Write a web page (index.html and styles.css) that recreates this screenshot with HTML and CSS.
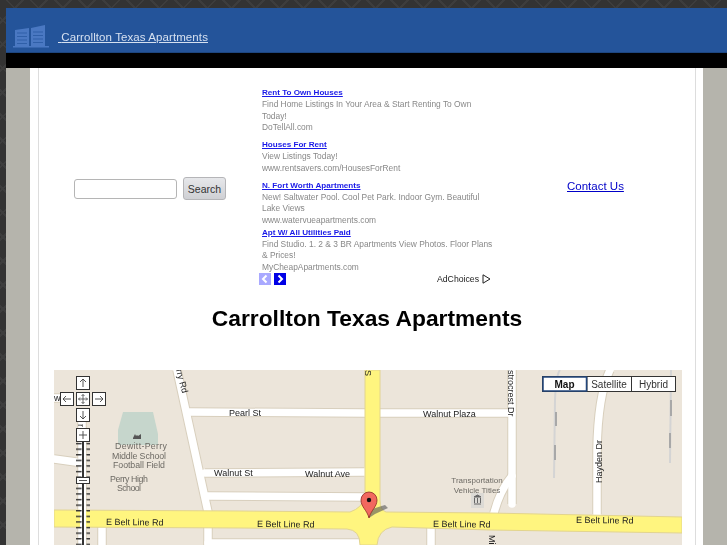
FILE: index.html
```html
<!DOCTYPE html>
<html lang="en">
<head>
<meta charset="utf-8">
<title>Carrollton Texas Apartments</title>
<link rel="stylesheet" href="styles.css">
</head>
<body>
<header class="site-header">
  <svg class="logo" width="36" height="25" viewBox="0 0 36 25">
    <path fill="#4a78c2" d="M2 6l14-2v18H2zM18 4l14-3v21H18zM0 22h36v1.5H0z"/>
    <path stroke="#2f5fa8" stroke-width="1.2" d="M4 9h10M4 12.5h10M4 16h10M4 19.500h10M20 8h10M20 11.500h10M20 15h10M20 18.500h10"/>
  </svg>
  <a class="site-link" href="#"><span class="pre"> </span>Carrollton Texas Apartments</a>
</header>
<div class="black-bar"></div>
<div class="page">
  <main class="sheet">
    <div class="inner">
    <div class="columns">
      <form class="search">
        <input class="search-input" type="text">
        <button class="search-btn" type="button">Search</button>
      </form>
      <section class="ads">
        <div class="ad gap-a">
          <a class="ad-title" href="#">Rent To Own Houses</a>
          <p class="ad-desc">Find Home Listings In Your Area &amp; Start Renting To Own Today!</p>
          <p class="ad-url">DoTellAll.com</p>
        </div>
        <div class="ad gap-a">
          <a class="ad-title" href="#">Houses For Rent</a>
          <p class="ad-desc">View Listings Today!</p>
          <p class="ad-url">www.rentsavers.com/HousesForRent</p>
        </div>
        <div class="ad gap-b">
          <a class="ad-title" href="#">N. Fort Worth Apartments</a>
          <p class="ad-desc">New! Saltwater Pool. Cool Pet Park. Indoor Gym. Beautiful Lake Views</p>
          <p class="ad-url">www.watervueapartments.com</p>
        </div>
        <div class="ad">
          <a class="ad-title" href="#">Apt W/ All Utilities Paid</a>
          <p class="ad-desc">Find Studio. 1. 2 &amp; 3 BR Apartments View Photos. Floor Plans &amp; Prices!</p>
          <p class="ad-url">MyCheapApartments.com</p>
        </div>
        <div class="ad-foot">
          <span class="pager off"><svg width="12" height="12" viewBox="0 0 12 12"><path d="M7.500 2.500L4 6l3.500 3.500" fill="none" stroke="#fff" stroke-width="2"/></svg></span>
          <span class="pager"><svg width="12" height="12" viewBox="0 0 12 12"><path d="M4.500 2.500L8 6l-3.500 3.500" fill="none" stroke="#fff" stroke-width="2"/></svg></span>
          <span class="adchoices">AdChoices
            <svg width="9" height="10" viewBox="0 0 9 10"><path d="M1 .8v8.400L8 5z" fill="none" stroke="#222" stroke-width="1"/></svg>
          </span>
        </div>
      </section>
      <a class="contact" href="#">Contact Us</a>
    </div>
    <h1 class="title">Carrollton Texas Apartments</h1>
    <svg class="map" width="628" height="175" viewBox="54 370 628 175">
      <defs>
        <pattern id="ticks" x="0" y="441" width="14" height="5.600" patternUnits="userSpaceOnUse">
          <path d="M3 2.500h8" stroke="#333" stroke-width="1.500" stroke-linecap="round"/>
        </pattern>
      </defs>
      <rect x="54" y="370" width="628" height="175" fill="#ece5da"/>
      <g class="road-edge">
        <path d="M177 370L208 512V545"/>
        <path d="M190 412L365 413M380 413L512 413"/>
        <path d="M205 473L364 472"/>
        <path d="M208 496L364 497"/>
        <path d="M512 370V504"/>
        <path d="M597 514V450Q598 395 610 370"/>
        <path d="M54 459L76 462M54 398H60"/>
        <path d="M82 420V545M102 527V545M431 528V545"/>
        <path d="M512 476Q500 490 494 513"/>
        <path d="M208 543H360"/>
      </g>
      <g class="road">
        <path d="M177 370L208 512V545"/>
        <path d="M190 412L365 413M380 413L512 413"/>
        <path d="M205 473L364 472"/>
        <path d="M208 496L364 497"/>
        <path d="M512 370V504"/>
        <path d="M597 514V450Q598 395 610 370"/>
        <path d="M54 459L76 462M54 398H60"/>
        <path d="M82 420V545M102 527V545M431 528V545"/>
        <path d="M512 476Q500 490 494 513"/>
        <path d="M208 543H360"/>
      </g>
      <path class="creek" d="M560 370Q556 375 555 400L554 478"/>
      <path class="creek-dash" d="M556 412V426M555 445V460"/>
      <path class="creek" d="M671 370L670 463"/>
      <path class="creek-dash" d="M671 400V416M670 433V448"/>
      <path class="highway" d="M54 510L240 511L350 512Q362 508 365 497L365 370H380V500Q380 510 386 512L490 513L682 517V533L490 530L392 527Q378 530 377 545H360Q360 530 347 529L240 528L54 527Z"/>
      <path class="field" d="M123 412H153L158 434V445H118V430Z"/>
      <rect class="bldg" x="471" y="493" width="13" height="15"/>
      <path d="M474 497h7l-3.500-2zM474.500 498v5M477.500 498v5M480.500 498v5M474 504h7" stroke="#666" fill="#666" stroke-width="1"/>
      <path d="M133 438l2-4 1 2 1-1 1 1 3-2v5h-8z" fill="#555"/>

      <g class="lbl">
        <text x="229" y="416">Pearl St</text>
        <text x="423" y="417">Walnut Plaza</text>
        <text x="214" y="476">Walnut St</text>
        <text x="305" y="477">Walnut Ave</text>
        <text x="106" y="525" transform="rotate(.6 106 525)">E Belt Line Rd</text>
        <text x="257" y="527" transform="rotate(.6 257 527)">E Belt Line Rd</text>
        <text x="433" y="527" transform="rotate(.6 433 527)">E Belt Line Rd</text>
        <text x="576" y="523" transform="rotate(.6 576 523)">E Belt Line Rd</text>
        <text x="176" y="370" transform="rotate(75 176 370)">rry Rd</text>
        <text x="602" y="483" transform="rotate(-90 602 483)">Hayden Dr</text>
        <text x="508" y="370" transform="rotate(90 508 370)">strocrest Dr</text>
        <text x="489" y="535" transform="rotate(90 489 535)">Mill</text>
        <text x="365" y="370" transform="rotate(90 365 370)">S</text>
        <text x="54" y="401">w</text>
        <text x="78" y="424" transform="rotate(90 78 424)">r</text>
      </g>
      <g class="poi">
        <text x="141" y="449" textLength="52">Dewitt-Perry</text>
        <text x="139" y="459" textLength="54">Middle School</text>
        <text x="139" y="468" textLength="52">Football Field</text>
        <text x="129" y="482" textLength="38">Perry High</text>
        <text x="129" y="491" textLength="24">School</text>
      </g>
      <g class="poi small">
        <text x="477" y="483">Transportation</text>
        <text x="477" y="493">Vehicle Titles</text>
      </g>

      <path d="M369 518L372 509L385 505L388 508L375 514Z" fill="#555" opacity=".6"/>
      <path d="M369 518C367 510 361 507 361 500A8 8 0 0 1 377 500C377 507 371 510 369 518Z" fill="#f2685f" stroke="#8b2a24" stroke-width=".8"/>
      <circle cx="369" cy="500" r="2.200" fill="#111"/>

      <rect class="track" x="80" y="441" width="6" height="104"/>
      <rect x="76" y="441" width="14" height="104" fill="url(#ticks)"/>
      <rect class="track-in" x="82" y="441" width="2" height="104"/>
      <g class="ctl">
        <rect x="76.500" y="376.500" width="13" height="13"/>
        <rect x="60.500" y="392.500" width="13" height="13"/>
        <rect x="76.500" y="392.500" width="13" height="13"/>
        <rect x="92.500" y="392.500" width="13" height="13"/>
        <rect x="76.500" y="408.500" width="13" height="13"/>
        <rect x="76.500" y="428.500" width="13" height="13"/>
        <rect x="76.500" y="477.500" width="13" height="6"/>
      </g>
      <path class="glyph" d="M83 387V379M80 382L83 379L86 382M71 399H63M66 396L63 399L66 402M95 399H103M100 396L103 399L100 402M83 411V419M80 416L83 419L86 416M79 435H87M83 431V439M79 480.500H87"/>
      <path class="glyph-sm" d="M83 394.500V403.500M78.500 399H87.500M81.500 396L83 394.500L84.500 396M81.500 402L83 403.500L84.500 402M80 397.500L78.500 399L80 400.500M86 397.500L87.500 399L86 400.500"/>

      <g class="type">
        <rect x="542.500" y="376.500" width="133" height="15"/>
        <path d="M587 377V391M631.500 377V391"/>
        <rect class="type-on" x="543" y="377" width="43.500" height="14"/>
      </g>
      <g class="type-lbl">
        <text class="on" x="564.500" y="387.500">Map</text>
        <text x="609" y="387.500">Satellite</text>
        <text x="653.500" y="387.500">Hybrid</text>
      </g>
    </svg>
    </div>
  </main>
</div>
</body>
</html>
```

FILE: styles.css
```css
html, body {
  margin: 0;
  height: 545px;
  overflow: hidden;
}
body {
  box-sizing: border-box;
  padding: 8px 0 0 6px;
  font-family: "Liberation Sans", Arial, sans-serif;
  background-color: #333;
  background-image:
    repeating-linear-gradient(45deg, transparent 0 15px, #3d3d3d 15px 17px),
    repeating-linear-gradient(-45deg, transparent 0 15px, #3d3d3d 15px 17px);
}
.site-header {
  height: 45px;
  box-sizing: border-box;
  background: #24549a;
  border-bottom: 1px solid #1d4680;
  display: flex;
  align-items: flex-end;
  padding: 0 0 3px 7px;
}
.logo {
  display: block;
  margin-right: 7px;
  filter: blur(.5px);
}
.site-link {
  color: #d5e0f0;
  font-size: 11.500px;
  letter-spacing: .09px;
  line-height: 13px;
  margin-bottom: 5px;
  white-space: pre;
  filter: blur(.3px);
}
.pre { padding-left: 2px; }
.black-bar {
  height: 15px;
  background: #000;
}
.page {
  background: #b5b4ac;
  padding: 0 24px;
  height: 477px;
}
.sheet {
  box-sizing: border-box;
  width: 673px;
  height: 477px;
  background: #fff;
  padding: 0 7px 0 8px;
}
.inner {
  height: 477px;
  border-left: 1px solid #ddd;
  border-right: 1px solid #ddd;
}
.columns {
  display: flex;
  align-items: flex-start;
  height: 222px;
}
.search {
  width: 188px;
  padding: 109px 0 0 35px;
  display: flex;
  align-items: center;
  gap: 6px;
}
.search-input {
  box-sizing: border-box;
  width: 103px;
  height: 20px;
  margin: 0;
  padding: 0;
  background: #fff;
  border: 1px solid #b5b5b5;
  border-radius: 3px;
}
.search-btn {
  box-sizing: border-box;
  width: 43px;
  height: 23px;
  margin: 0;
  padding: 0;
  font: 10.500px "Liberation Sans", Arial, sans-serif;
  color: #333;
  background: linear-gradient(#e6e7ea, #cfd0d4);
  border: 1px solid #b5b5b8;
  border-radius: 3px;
}
.ads {
  width: 233px;
  padding-top: 19px;
  font-size: 8.400px;
  filter: blur(.35px);
}
.ad-title {
  display: block;
  line-height: 12px;
  font-weight: bold;
  font-size: 8.100px;
  color: #1a1ae8;
  text-decoration: underline;
}
.ad p { margin: 0; }
.ad-desc {
  line-height: 11.500px;
  color: #888;
}
.ad-url {
  line-height: 10.500px;
  color: #888;
}
.gap-a { margin-bottom: 6.500px; }
.gap-b { margin-bottom: 1.500px; }
.ad-foot {
  display: flex;
  align-items: center;
  gap: 3px;
  margin: 1px 0 0 -3px;
  width: 232px;
}
.pager {
  width: 12px;
  height: 12px;
  display: block;
  background: #0000e6;
}
.pager svg { display: block; }
.pager.off { background: #a9a9ff; }
.adchoices {
  margin-left: auto;
  display: flex;
  align-items: center;
  gap: 3px;
  font-size: 8.700px;
  color: #222;
}
.contact {
  margin: 111px 0 0 72px;
  font-size: 11.500px;
  line-height: 14px;
  color: #0000c8;
  white-space: nowrap;
  filter: blur(.25px);
}
.title {
  margin: 0;
  height: 80px;
  padding-top: 14px;
  box-sizing: border-box;
  font-size: 22.800px;
  line-height: 28px;
  text-align: center;
  color: #000;
  filter: blur(.25px);
}
.map {
  display: block;
  margin-left: 15px;
  filter: blur(.4px);
}
.road-edge path { fill: none; stroke: #d8cfbd; stroke-width: 9.500; }
.road path { fill: none; stroke: #fff; stroke-width: 7.500; stroke-linecap: round; }
.creek { fill: none; stroke: #d4d4d4; stroke-width: 2; }
.creek-dash { fill: none; stroke: #a8a8a8; stroke-width: 2; }
.highway { fill: #fff57f; stroke: #e2d48f; stroke-width: 1; }
.field { fill: #c6d6cc; }
.bldg { fill: #dcdad5; }
.lbl text {
  font-size: 9px;
  fill: #222;
}
.poi text {
  font-size: 8.800px;
  text-anchor: middle;
  fill: #6d6a64;
}
.poi.small text { font-size: 8px; }
.track { fill: #fff; }
.track-in { fill: #333; }
.ctl rect { fill: #fff; stroke: #333; stroke-width: 1; }
.glyph { fill: none; stroke: #444; stroke-width: .9; }
.glyph-sm { fill: none; stroke: #444; stroke-width: .8; }
.type rect { fill: #fff; stroke: #333; stroke-width: 1; }
.type path { stroke: #333; stroke-width: 1; }
.type .type-on { fill: #fff; stroke: #23477c; stroke-width: 1.500; }
.type-lbl text {
  font-size: 10px;
  text-anchor: middle;
  fill: #333;
}
.type-lbl .on { font-weight: bold; fill: #111; }
```
